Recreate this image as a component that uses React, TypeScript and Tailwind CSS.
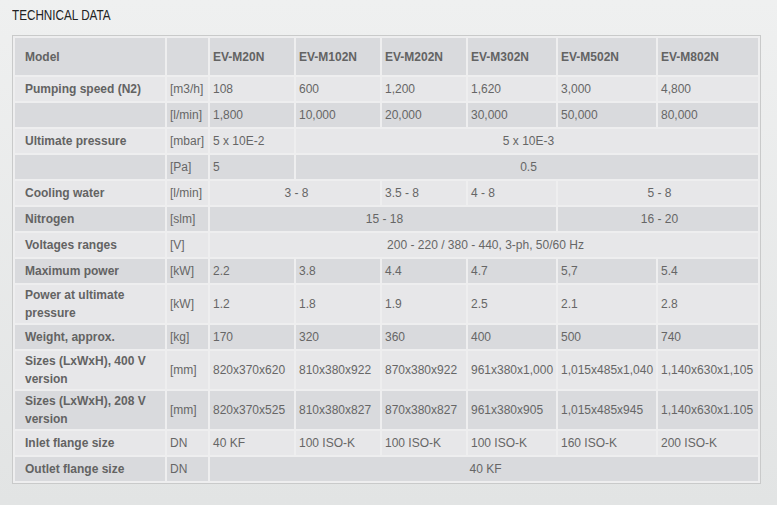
type Cell = { text: string; span?: number; center?: boolean };

type Row = { label: string; unit: string; cells: Cell[] };

const MODELS = ["EV-M20N", "EV-M102N", "EV-M202N", "EV-M302N", "EV-M502N", "EV-M802N"];

const c = (text: string, span?: number, center?: boolean): Cell => ({ text, span, center });

const ROWS: Row[] = [
  { label: "Pumping speed (N2)", unit: "[m3/h]", cells: ["108", "600", "1,200", "1,620", "3,000", "4,800"].map((t) => c(t)) },
  { label: "", unit: "[l/min]", cells: ["1,800", "10,000", "20,000", "30,000", "50,000", "80,000"].map((t) => c(t)) },
  { label: "Ultimate pressure", unit: "[mbar]", cells: [c("5 x 10E-2"), c("5 x 10E-3", 5, true)] },
  { label: "", unit: "[Pa]", cells: [c("5"), c("0.5", 5, true)] },
  { label: "Cooling water", unit: "[l/min]", cells: [c("3 - 8", 2, true), c("3.5 - 8"), c("4 - 8"), c("5 - 8", 2, true)] },
  { label: "Nitrogen", unit: "[slm]", cells: [c("15 - 18", 4, true), c("16 - 20", 2, true)] },
  { label: "Voltages ranges", unit: "[V]", cells: [c("200 - 220 / 380 - 440, 3-ph, 50/60 Hz", 6, true)] },
  { label: "Maximum power", unit: "[kW]", cells: ["2.2", "3.8", "4.4", "4.7", "5,7", "5.4"].map((t) => c(t)) },
  { label: "Power at ultimate pressure", unit: "[kW]", cells: ["1.2", "1.8", "1.9", "2.5", "2.1", "2.8"].map((t) => c(t)) },
  { label: "Weight, approx.", unit: "[kg]", cells: ["170", "320", "360", "400", "500", "740"].map((t) => c(t)) },
  {
    label: "Sizes (LxWxH), 400 V version",
    unit: "[mm]",
    cells: ["820x370x620", "810x380x922", "870x380x922", "961x380x1,000", "1,015x485x1,040", "1,140x630x1,105"].map((t) => c(t)),
  },
  {
    label: "Sizes (LxWxH), 208 V version",
    unit: "[mm]",
    cells: ["820x370x525", "810x380x827", "870x380x827", "961x380x905", "1,015x485x945", "1,140x630x1.105"].map((t) => c(t)),
  },
  { label: "Inlet flange size", unit: "DN", cells: ["40 KF", "100 ISO-K", "100 ISO-K", "100 ISO-K", "160 ISO-K", "200 ISO-K"].map((t) => c(t)) },
  { label: "Outlet flange size", unit: "DN", cells: [c("40 KF", 6, true)] },
];

export default function App() {
  return (
    <div className="min-h-[505px] w-[777px] bg-gradient-to-b from-[#eff0f0] to-[#e2e4e4] font-['Liberation_Sans',Arial,sans-serif]">
      <h1 className="px-[12px] pt-[5px] text-[15px] leading-[20px] text-[#222]">
        <span className="inline-block origin-left scale-x-[0.78]">TECHNICAL DATA</span>
      </h1>

      <div className="ml-[12px] mt-[10px] w-[749px] border border-[#c9caca] bg-[#eeeeef]">
        <table className="w-[747px] table-fixed border-separate border-spacing-[2px] text-[12px] leading-[18px] text-[#666]">
          <colgroup>
            <col className="w-[150px]" />
            <col className="w-[41px]" />
            <col className="w-[84px]" />
            <col className="w-[84px]" />
            <col className="w-[84px]" />
            <col className="w-[88px]" />
            <col className="w-[98px]" />
            <col className="w-[100px]" />
          </colgroup>
          <thead>
            <tr className="h-[37px] bg-[#d9dadd]">
              <th className="pl-[10px] text-left font-bold text-[#636363]">Model</th>
              <th />
              {MODELS.map((m) => (
                <th key={m} className="pl-[3px] text-left font-bold text-[#636363]">
                  {m}
                </th>
              ))}
            </tr>
          </thead>
          <tbody>
            {ROWS.map((row, i) => (
              <tr key={i} className={`h-[24px] ${i % 2 === 0 ? "bg-[#e7e7e9]" : "bg-[#d9dadd]"}`}>
                <td className="py-[1px] pl-[10px] pr-[8px] font-bold text-[#636363]">{row.label}</td>
                <td className="pl-[3px]">{row.unit}</td>
                {row.cells.map((cell, j) => (
                  <td key={j} colSpan={cell.span} className={`whitespace-nowrap pl-[3px] ${cell.center ? "text-center" : "text-left"}`}>
                    {cell.text}
                  </td>
                ))}
              </tr>
            ))}
          </tbody>
        </table>
      </div>
    </div>
  );
}
